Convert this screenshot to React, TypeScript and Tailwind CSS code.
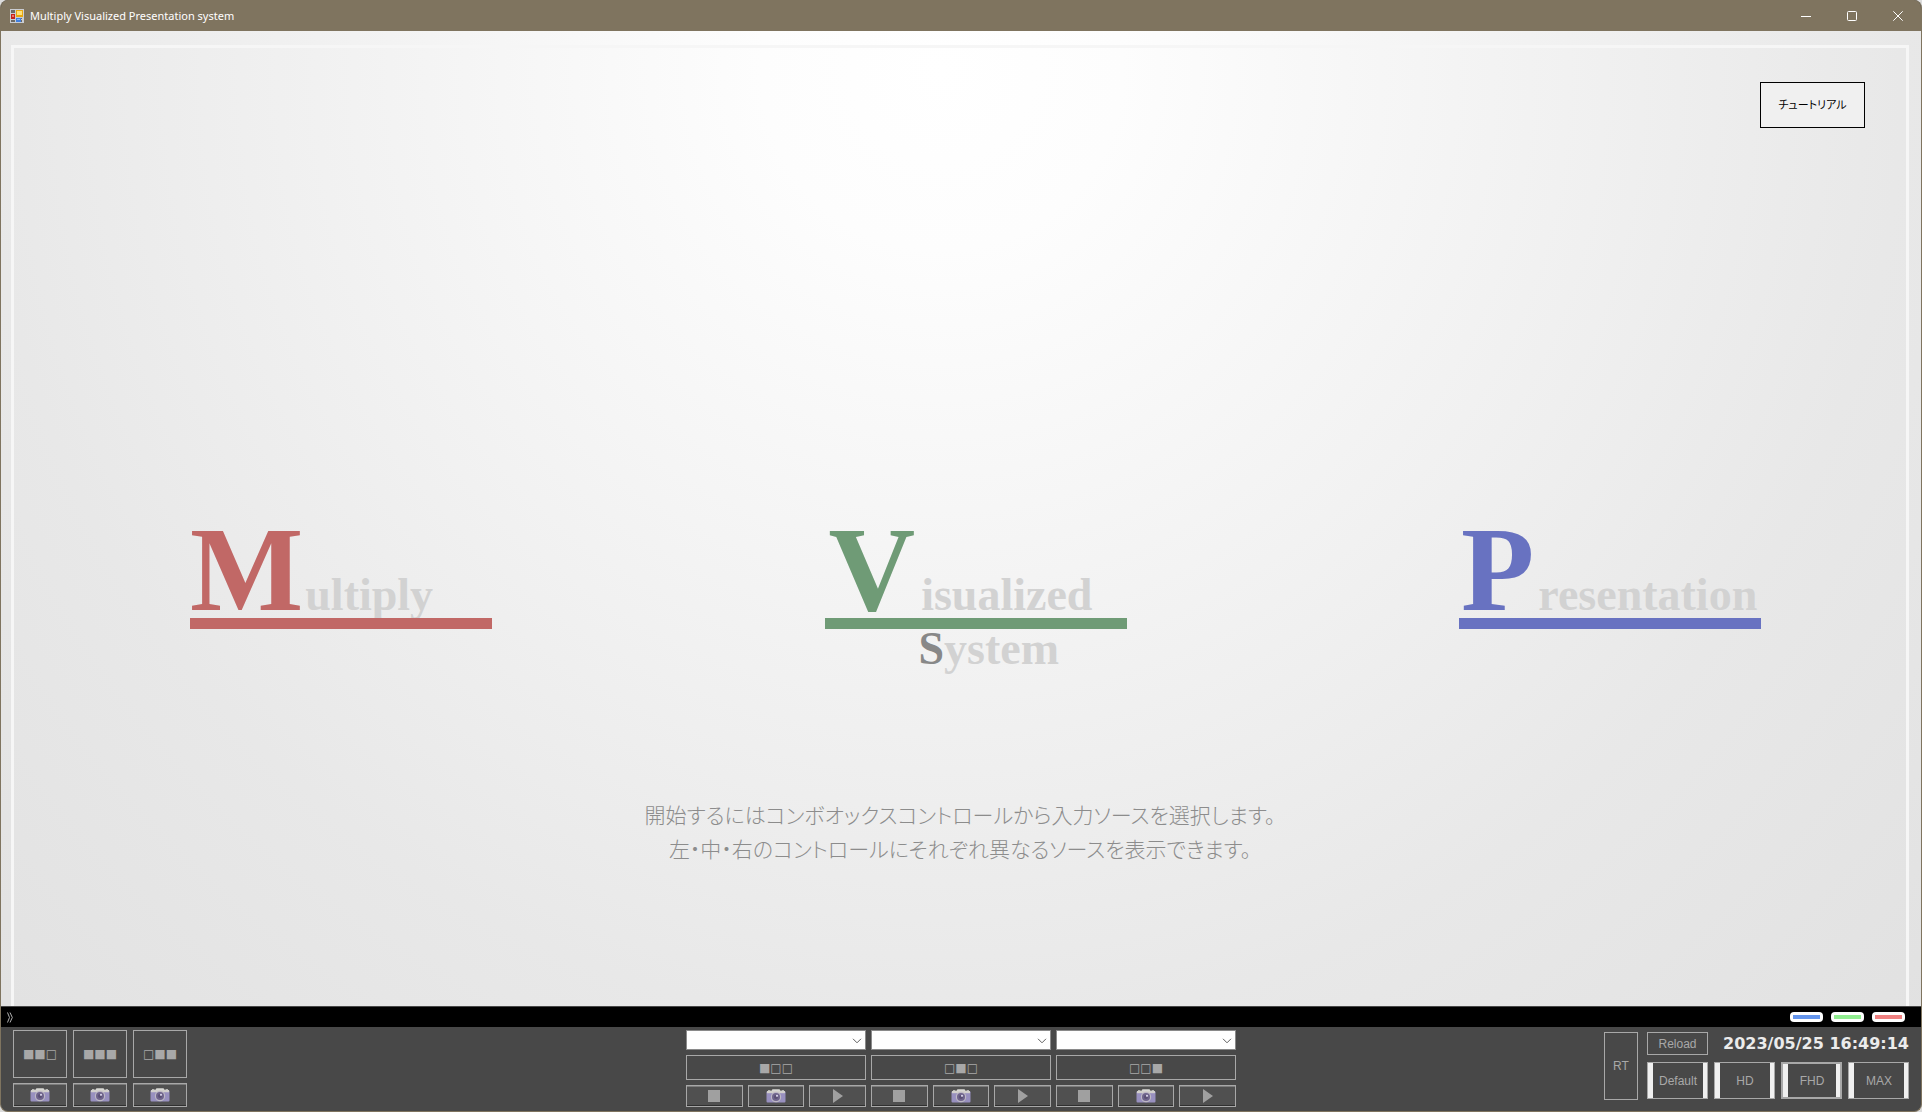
import type { ReactNode } from 'react'

const logos = [
  { initial: 'M', rest: 'ultiply', text: 'text-[#c16866]', bar: 'bg-[#c16866]', spacing: 'gap-0.5' },
  {
    initial: 'V',
    rest: 'isualized',
    text: 'text-[#6f9b76]',
    bar: 'bg-[#6f9b76]',
    spacing: 'gap-1.5 pl-1',
    system: true,
  },
  {
    initial: 'P',
    rest: 'resentation',
    text: 'text-[#6872c1]',
    bar: 'bg-[#6872c1]',
    spacing: 'gap-1 pl-0.5',
  },
]

const layouts = [
  { id: 'left-center', glyphs: '■■□' },
  { id: 'all', glyphs: '■■■' },
  { id: 'center-right', glyphs: '□■■' },
]

const sources = [
  { id: 'left', glyphs: '■□□' },
  { id: 'center', glyphs: '□■□' },
  { id: 'right', glyphs: '□□■' },
]

const indicators = [
  { id: 'left', color: 'bg-[#6495ed]' },
  { id: 'center', color: 'bg-[#90ee90]' },
  { id: 'right', color: 'bg-[#f08080]' },
]

const sizes = [
  { label: 'Default', frame: 'border' },
  { label: 'HD', frame: 'border' },
  { label: 'FHD', frame: 'border-2' },
  { label: 'MAX', frame: 'border' },
]

export default function App() {
  return (
    <div className="h-screen bg-[#dcdcdc] font-['Liberation_Sans','Noto_Sans_CJK_JP',sans-serif]">
      <div className="flex h-full flex-col overflow-hidden rounded-lg border border-t-0 border-[#7f745f] bg-[#484848]">
        <TitleBar />
        <Stage />
        <StatusBar />
        <ControlPanel />
      </div>
    </div>
  )
}

function TitleBar() {
  return (
    <header className="flex h-[31px] shrink-0 items-center bg-[#7f745f] pl-[9px] text-white">
      <AppIcon />
      <h1 className="ml-1.5 font-['Noto_Sans',sans-serif] text-[11px] leading-4">
        Multiply Visualized Presentation system
      </h1>
      <div className="ml-auto flex h-full">
        <WindowButton label="Minimize">
          <path d="M0 5.5h10" />
        </WindowButton>
        <WindowButton label="Maximize">
          <rect x="0.5" y="0.5" width="9" height="9" rx="1" />
        </WindowButton>
        <WindowButton label="Close">
          <path d="M0.3 0.3l9.4 9.4M9.7 0.3L0.3 9.7" />
        </WindowButton>
      </div>
    </header>
  )
}

function WindowButton({ label, children }: { label: string; children: ReactNode }) {
  return (
    <button type="button" aria-label={label} className="flex w-[46px] items-center justify-center">
      <svg width="10" height="10" viewBox="0 0 10 10" fill="none" stroke="currentColor">
        {children}
      </svg>
    </button>
  )
}

function Stage() {
  return (
    <main className="flex min-h-0 flex-1 flex-col bg-[radial-gradient(ellipse_1500px_1500px_at_49%_4%,#ffffff_0%,#fdfdfd_12%,#e8e8e8_64%,#dfdfdf_100%)] pt-[14px] pr-3 pl-[10px]">
      <div className="flex min-h-0 flex-1 flex-col border-[3px] border-b-0 border-[#f6f6f6]">
        <div className="flex justify-end pt-[34px] pr-[41px]">
          <button
            type="button"
            className="h-[46px] w-[105px] border border-black bg-[#f0f0f0] text-[11px] text-black [font-feature-settings:'palt']"
          >
            チュートリアル
          </button>
        </div>

        <div className="mt-[372px] flex items-start justify-between pr-[145px] pl-[176px]">
          {logos.map((logo) => (
            <div
              key={logo.initial}
              className="w-[302px] font-['Liberation_Serif',serif] text-[46px] leading-10 font-bold text-[#d2d2d2]"
            >
              <div className={`flex h-[118px] items-baseline whitespace-nowrap ${logo.spacing}`}>
                <span className={`text-[120px] leading-[140px] ${logo.text}`}>{logo.initial}</span>
                <span>{logo.rest}</span>
              </div>
              {/* relative keeps the bar above the descenders */}
              <div className={`relative h-[11px] ${logo.bar}`} />
              {logo.system && (
                <p className="h-12 pl-[94px]">
                  <span className="text-[#888888]">S</span>ystem
                </p>
              )}
            </div>
          ))}
        </div>

        <p className="mt-[122px] text-center text-[21px] leading-[34px] font-light text-[#8c8c8c] [font-feature-settings:'palt']">
          開始するにはコンボオックスコントロールから入力ソースを選択します。
          <br />
          左・中・右のコントロールにそれぞれ異なるソースを表示できます。
        </p>
      </div>
    </main>
  )
}

function StatusBar() {
  return (
    <div className="flex h-[21px] shrink-0 items-center justify-between border-t border-[#484848] bg-black pr-4 pl-1.5">
      <button type="button" aria-label="Collapse panel" className="text-[#b0b0b0]">
        <svg width="6" height="11" viewBox="0 0 6 11" fill="none" stroke="currentColor">
          <path d="M0.5 0.5l2 5-2 5M3 0.5l2.3 5-2.3 5" />
        </svg>
      </button>
      <div className="flex gap-2">
        {indicators.map(({ id, color }) => (
          <div key={id} className="h-[10px] w-[33px] rounded-[4px] bg-white p-[3px]">
            <div className={`h-1 ${color}`} />
          </div>
        ))}
      </div>
    </div>
  )
}

function ControlPanel() {
  return (
    <footer className="grid h-[84px] shrink-0 grid-cols-[1fr_auto_1fr] items-start text-[12px] text-[#a8a8a8]">
      {/* Layout presets */}
      <div className="grid w-fit grid-cols-3 gap-x-1.5 gap-y-[5px] pt-[3px] pl-3">
        {layouts.map(({ id, glyphs }) => (
          <button
            key={id}
            type="button"
            aria-label={`Layout ${id}`}
            className="h-12 w-[54px] border border-[#a8a8a8] font-['DejaVu_Sans',sans-serif]"
          >
            {glyphs}
          </button>
        ))}
        {layouts.map(({ id }) => (
          <IconButton key={id} label={`Capture ${id}`} size="h-6 w-[54px]">
            <CameraIcon />
          </IconButton>
        ))}
      </div>

      {/* Input sources */}
      <div className="flex gap-[5px] pt-[3px]">
        {sources.map(({ id, glyphs }) => (
          <div key={id} className="flex w-[180px] flex-col gap-[5px]">
            <SourceSelect label={`Source ${id}`} />
            <button
              type="button"
              aria-label={`Show ${id}`}
              className="h-[25px] border border-[#a8a8a8] font-['DejaVu_Sans',sans-serif]"
            >
              {glyphs}
            </button>
            <div className="flex gap-[5px]">
              <IconButton label={`Stop ${id}`} size="h-[22px] flex-1">
                <svg width="12" height="12" viewBox="0 0 12 12" fill="#a0a0a0">
                  <rect width="12" height="12" />
                </svg>
              </IconButton>
              <IconButton label={`Capture ${id}`} size="h-[22px] flex-1">
                <CameraIcon />
              </IconButton>
              <IconButton label={`Play ${id}`} size="h-[22px] flex-1">
                <svg width="10" height="14" viewBox="0 0 10 14" fill="#a0a0a0">
                  <path d="M0 0l10 7-10 7z" />
                </svg>
              </IconButton>
            </div>
          </div>
        ))}
      </div>

      {/* Window size and clock */}
      <div className="flex justify-end gap-[9px] pt-[5px] pr-3">
        <button type="button" className="h-[68px] w-[34px] border border-[#a8a8a8]">
          RT
        </button>
        <div className="flex flex-col gap-[7px]">
          <div className="flex items-center justify-between">
            <button type="button" className="h-[23px] w-[61px] border border-[#a8a8a8]">
              Reload
            </button>
            <time
              dateTime="2023-05-25T16:49:14"
              className="font-['DejaVu_Sans',sans-serif] text-[16px] leading-5 font-bold text-[#ebebeb]"
            >
              2023/05/25 16:49:14
            </time>
          </div>
          <div className="flex gap-1.5">
            {sizes.map(({ label, frame }) => (
              <button
                key={label}
                type="button"
                className={`flex h-[37px] w-[61px] items-stretch justify-between border-[#a8a8a8] ${frame}`}
              >
                <span className="w-[5px] bg-[#f0f0f0]" />
                <span className="self-center">{label}</span>
                <span className="w-1 bg-[#f0f0f0]" />
              </button>
            ))}
          </div>
        </div>
      </div>
    </footer>
  )
}

function SourceSelect({ label }: { label: string }) {
  return (
    <div className="relative h-5">
      <select
        aria-label={label}
        className="block h-5 w-full appearance-none border border-[#8a8a8a] bg-white px-1 text-black"
      />
      <svg
        className="pointer-events-none absolute top-2 right-1"
        width="10"
        height="6"
        viewBox="0 0 10 6"
        fill="none"
        stroke="#606060"
      >
        <path d="M1 0.8l4 4 4-4" />
      </svg>
    </div>
  )
}

function IconButton({
  label,
  size,
  children,
}: {
  label: string
  size: string
  children: ReactNode
}) {
  return (
    <button
      type="button"
      aria-label={label}
      className={`flex items-center justify-center border border-[#a8a8a8] bg-[#505050] shadow-[inset_0_1px_0_#7c7c7c,inset_0_-1px_0_#303030] ${size}`}
    >
      {children}
    </button>
  )
}

function CameraIcon() {
  return (
    <svg width="20" height="14" viewBox="0 0 20 14">
      <path d="M2 1.2h2.5v1.3H2zM15.5 1.2H18v1.3h-2.5z" fill="#dcdcd8" />
      <path d="M5 2.2L6.5 0.2h7L15 2.2z" fill="#d8d8d4" />
      <rect x="0.5" y="2.2" width="19" height="11.3" rx="1" fill="#9890bf" />
      <path d="M1 2h18v2.2H1z" fill="#d2d0cc" />
      <circle cx="10" cy="8" r="5.2" fill="#bdb8c4" />
      <circle cx="10" cy="8" r="4" fill="#6f648c" />
      <circle cx="10" cy="8" r="2" fill="#5a5074" />
      <circle cx="11" cy="6.8" r="1.1" fill="#d9d4ea" />
    </svg>
  )
}

function AppIcon() {
  return (
    <svg width="14" height="14" viewBox="0 0 14 14" aria-hidden="true">
      <rect x="0.5" y="0.5" width="13" height="13" fill="#6c6a66" stroke="#c9ccd2" />
      <path d="M5.5 1v12M1 4.5h4.5M1 10.5h12M12.5 8v5M5.5 8.5H13" stroke="#c9ccd2" />
      <rect x="6" y="1" width="7" height="7" fill="#e8a80f" />
      <rect x="7" y="2" width="5" height="4" fill="#ffe27a" />
      <rect x="1" y="5" width="4" height="5" fill="#c5221c" />
      <rect x="2" y="6" width="2" height="2" fill="#ee7468" />
      <rect x="6" y="9" width="5" height="4" fill="#3f7fe0" />
      <rect x="7" y="10" width="3" height="1" fill="#8db8f5" />
    </svg>
  )
}
